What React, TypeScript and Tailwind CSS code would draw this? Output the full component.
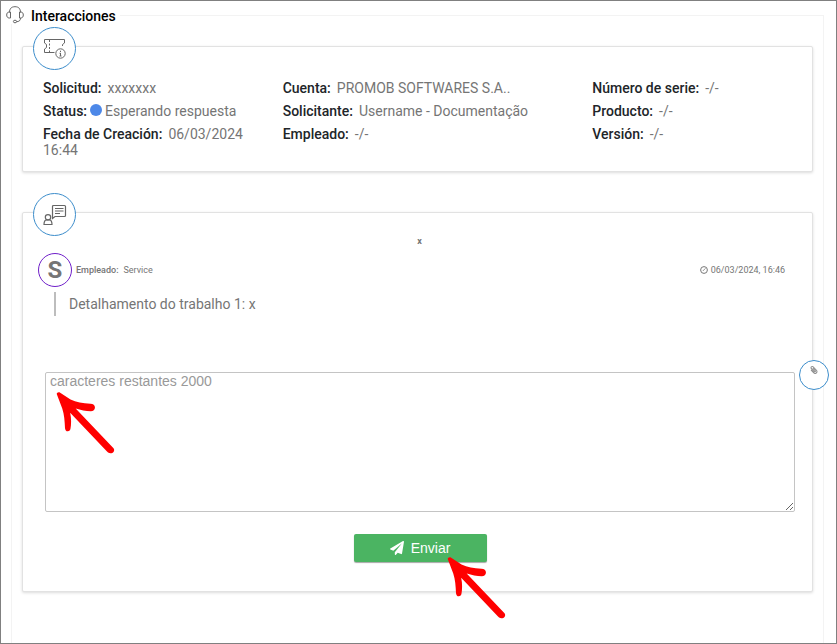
import type { ReactNode } from "react";
import { FaPaperPlane, FaPaperclip } from "react-icons/fa";

const HeadsetIcon = () => (
  <svg viewBox="0 0 18 18" className="h-[18px] w-[18px] fill-none stroke-[#666]" aria-hidden="true">
    <path d="M3.500 6.500C3.500 2.500 5.500.700 9 .700s5.500 1.800 5.500 5.800" />
    <path d="M4.500 6H3.200C1.500 6 .700 7.300.700 9s.800 3 2.500 3h1.300zM13.500 6h1.300c1.700 0 2.500 1.300 2.500 3s-.800 3-2.500 3h-1.300z" />
    <path d="M14.500 12c0 2.600-1.500 3.700-4 3.700" />
    <ellipse cx="9" cy="15.500" rx="1.600" ry="1.300" />
  </svg>
);

const TicketIcon = () => (
  <svg viewBox="0 0 24 22" className="h-[22px] w-6 fill-none stroke-[#666]" aria-hidden="true">
    <path d="M11.500 14.500H1.500v-3.500l2-1.500v-3l-2-1.500V1.500h20V5l-2 1.500v1.500" />
    <path d="M6.500 2v12" strokeDasharray="2 1.500" />
    <circle cx="17.500" cy="15.500" r="4.700" />
    <path d="M17.500 15v3M17.500 12.700v1.300M16.500 15.200h1M16.500 18h2" />
  </svg>
);

const ConversationIcon = () => (
  <svg viewBox="0 0 24 22" className="h-[22px] w-6 fill-none stroke-[#666]" strokeWidth="1.200" aria-hidden="true">
    <path d="M9.500 14.500v-12q0-1 1-1h11q1 0 1 1v9q0 1-1 1H12z" />
    <path d="M12 4.500h8.500M12 7h8.500M12 9.500h5" />
    <circle cx="5" cy="13.300" r="2.700" />
    <path d="M1 20.500c0-3 1-4.500 2.500-4.700h3c1.500.2 2.500 1.700 2.500 4.700z" />
  </svg>
);

const ClockIcon = () => (
  <svg viewBox="0 0 8 8" className="h-2 w-2 fill-none stroke-[#777]" aria-hidden="true">
    <circle cx="4" cy="4" r="3.400" />
    <path d="M5.500 2.300 2.800 5" strokeWidth="0.800" />
  </svg>
);

const Arrow = ({ className }: { className: string }) => (
  <svg
    viewBox="80 94 174 183"
    className={`pointer-events-none absolute z-10 h-[63px] w-[60px] fill-[#ff0000] ${className}`}
    aria-hidden="true"
  >
    <path d="M82 103C82 98 88 96 92 99L122 119C139 127 157 130 180 131C188 131 193 136 193 142C193 149 188 153 181 153C166 153 152 149 137 145L247 260C252 267 246 275 238 275C234 275 231 273 228 270L121 157C125 175 124 192 122 203C121 208 119 211 114 211C109 211 107 208 106 202C105 181 104 163 98 145Z" />
  </svg>
);

const Card = ({ icon, className, children }: { icon: ReactNode; className: string; children: ReactNode }) => (
  <section className={`relative rounded-xs border border-[#e2e2e2] bg-white shadow-[0_1px_3px_rgba(0,0,0,0.14)] ${className}`}>
    <div className="absolute -top-5 left-[10px] flex h-[43px] w-[43px] items-center justify-center rounded-full border border-[#3c8dcb] bg-white">
      {icon}
    </div>
    {children}
  </section>
);

const Field = ({ label, dot, children }: { label: string; dot?: boolean; children: ReactNode }) => (
  <div>
    <dt className="inline font-medium text-[#212529]">{label}:</dt>
    {dot && <span className="mx-[3px] inline-block h-3 w-3 rounded-full bg-[#4d88e8]" />}
    <dd className={dot ? "inline" : "ml-[6px] inline"}>{children}</dd>
  </div>
);

const columnClass = "flex flex-col gap-[7px]";

export default function App() {
  return (
    <main className="flex min-h-screen flex-col border border-[#808080] bg-white px-[10px] pt-[14px] font-['Roboto',sans-serif] text-sm leading-4 text-[#757575]">
      <div className="relative mr-[2px] flex-1 border-x border-t border-[#f3f3f3] px-[10px] pt-[30px] pb-[51px]">
        <header className="absolute -top-[10px] -left-[6px] flex items-center gap-[7px] bg-white pr-1">
          <HeadsetIcon />
          <h1 className="pt-[2px] font-medium text-black">Interacciones</h1>
        </header>

        <Card icon={<TicketIcon />} className="mb-10 px-5 pt-[33px] pb-[13px]">
          <div className="grid grid-cols-[24fr_31fr_20fr]">
            <dl className={`${columnClass} pr-7`}>
              <Field label="Solicitud">xxxxxxx</Field>
              <Field label="Status" dot>Esperando respuesta</Field>
              <Field label="Fecha de Creación">06/03/2024 16:44</Field>
            </dl>
            <dl className={columnClass}>
              <Field label="Cuenta">PROMOB SOFTWARES S.A..</Field>
              <Field label="Solicitante">Username - Documentação</Field>
              <Field label="Empleado">-/-</Field>
            </dl>
            <dl className={columnClass}>
              <Field label="Número de serie">-/-</Field>
              <Field label="Producto">-/-</Field>
              <Field label="Versión">-/-</Field>
            </dl>
          </div>
        </Card>

        <Card icon={<ConversationIcon />} className="pt-5 pr-[17px] pb-[29px] pl-[15px]">
          <p className="pl-[6px] text-center text-[9px] font-bold">x</p>

          <article className="mt-1">
            <div className="flex items-center pr-[10px] text-[9px]">
              <div className="flex h-[34px] w-[34px] items-center justify-center rounded-full border border-[#6f1fc9] text-2xl font-bold">
                S
              </div>
              <span className="ml-1 font-medium">Empleado:</span>
              <span className="ml-[5px]">Service</span>
              <time className="ml-auto flex items-center gap-[3px]" dateTime="2024-03-06T16:46">
                <ClockIcon />
                06/03/2024, 16:46
              </time>
            </div>
            <p className="mt-[5px] ml-4 border-l-2 border-[#bdbdbd] py-1 pl-[13px]">Detalhamento do trabalho 1: x</p>
          </article>

          <form className="mt-14 pl-[7px]" onSubmit={(event) => event.preventDefault()}>
            <div className="relative">
              <textarea
                aria-label="Mensaje"
                placeholder="caracteres restantes 2000"
                maxLength={2000}
                className="block h-[140px] w-full rounded-xs border border-[#c4c4c4] px-1 font-['Liberation_Sans',sans-serif] text-[#555] placeholder:text-[#999]"
              />
              <Arrow className="top-[19px] left-[11px]" />
              <button
                type="button"
                aria-label="Adjuntar archivo"
                className="absolute -top-3 -right-[34px] flex h-[30px] w-[30px] justify-center rounded-full border border-[#3c8dcb] bg-white pt-[5px]"
              >
                <FaPaperclip className="h-2 w-2 -scale-x-100 text-[#888]" />
              </button>
            </div>
            <div className="mt-[22px] flex justify-center">
              <div className="relative">
                <button
                  type="submit"
                  className="flex h-7 w-[133px] items-center justify-center gap-[7px] rounded-xs bg-[#4bb462] font-['Liberation_Sans',sans-serif] text-white shadow-[0_1px_1px_rgba(0,0,0,0.35)]"
                >
                  <FaPaperPlane className="h-[14px] w-[14px]" />
                  Enviar
                </button>
                <Arrow className="top-[22px] left-[93px]" />
              </div>
            </div>
          </form>
        </Card>
      </div>
    </main>
  );
}
